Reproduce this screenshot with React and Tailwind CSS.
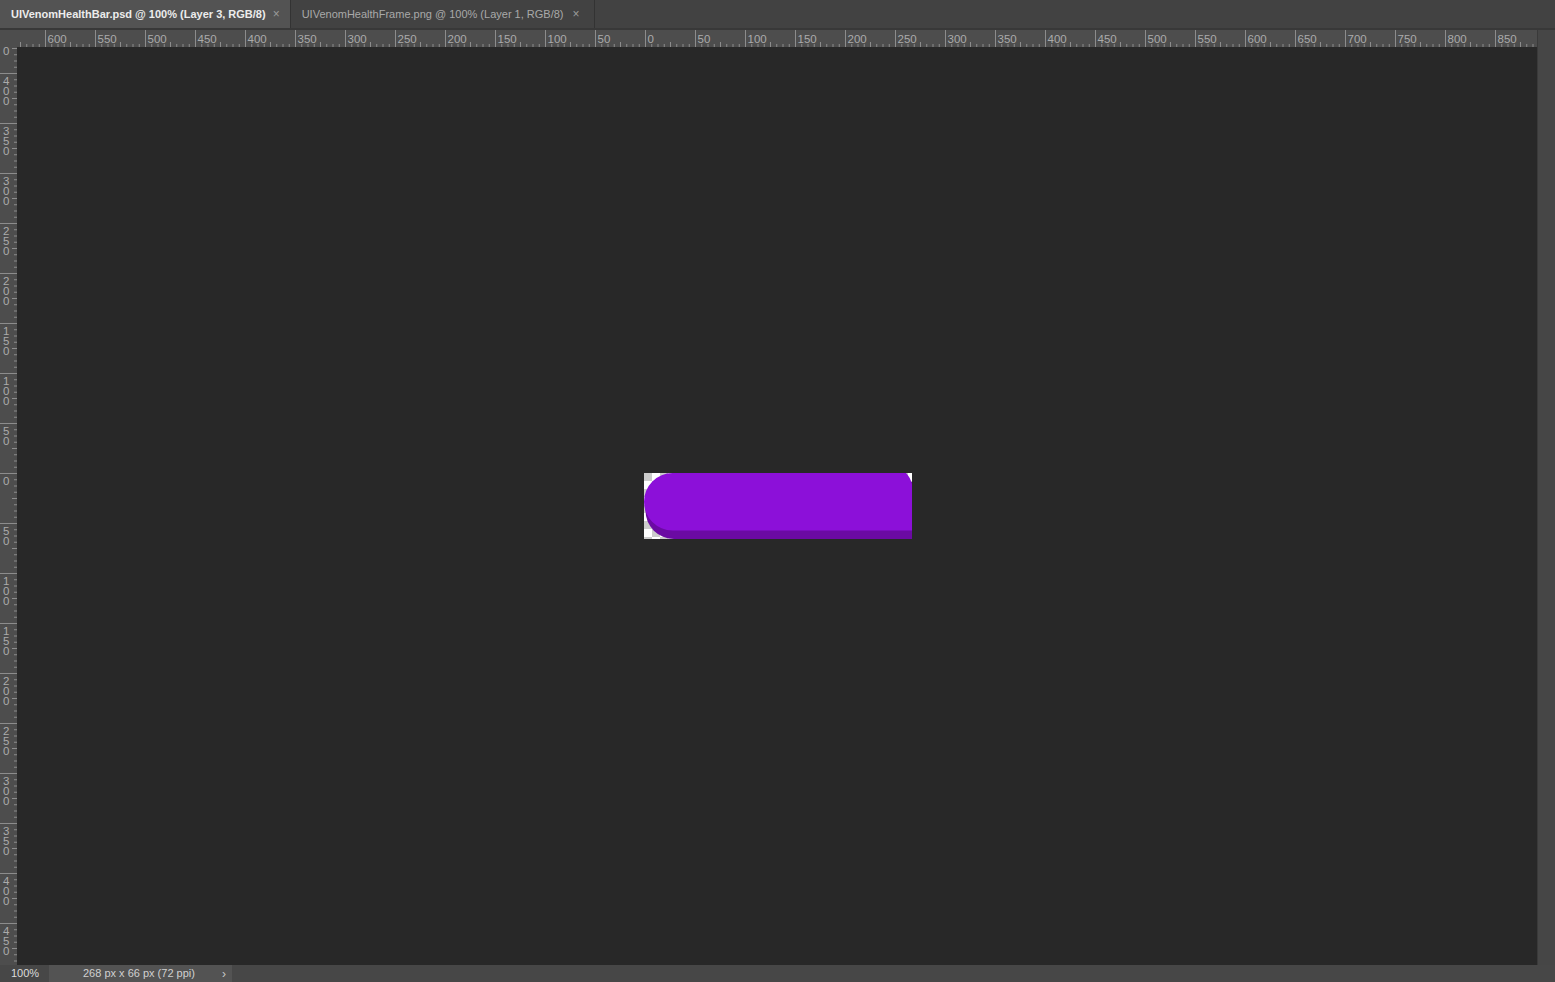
import React from 'react';

const H_ZERO = 628; // svg x of ruler origin (screen x 645)
const V_ZERO = 426; // svg y of ruler origin (screen y 473)

function hTicks() {
  const ticks = [];
  const labels = [];
  for (let i = -112; i <= 160; i++) {
    const x = H_ZERO + i * 6.25;
    if (x < 0 || x > 1520) continue;
    const sub = ((i % 8) + 8) % 8;
    if (sub === 0) {
      ticks.push(<line key={i} x1={x + 0.5} x2={x + 0.5} y1={0} y2={17} stroke="#8c8c8c" strokeWidth="1" />);
      if (x < 1500) {
        labels.push(
          <text key={'t' + i} x={x + 2.5} y={13} fill="#ababab" fontSize="11.5" fontFamily="'Liberation Sans', Arial, sans-serif">
            {Math.abs(i / 8) * 50}
          </text>
        );
      }
    } else {
      const len = sub === 4 ? 5 : 3;
      ticks.push(<line key={i} x1={x + 0.5} x2={x + 0.5} y1={17 - len} y2={17} stroke="#8c8c8c" strokeWidth="1" />);
    }
  }
  return [...ticks, ...labels];
}

function vTicks() {
  const out = [];
  for (let i = -80; i <= 80; i++) {
    const y = V_ZERO + i * 6.25;
    if (y < -40 || y > 918) continue;
    const sub = ((i % 8) + 8) % 8;
    if (sub === 0) {
      out.push(<line key={i} x1={0} x2={17} y1={y + 0.5} y2={y + 0.5} stroke="#8c8c8c" strokeWidth="1" />);
      const chars = String(Math.abs(i / 8) * 50).split('');
      chars.forEach((c, k) => {
        const by = y + 12 + k * 10;
        if (by < 8) return;
        out.push(
          <text key={'t' + i + '-' + k} x={3} y={by} fill="#ababab" fontSize="11.5" fontFamily="'Liberation Sans', Arial, sans-serif">
            {c}
          </text>
        );
      });
    } else {
      const len = sub === 4 ? 5 : 3;
      out.push(<line key={i} x1={17 - len} x2={17} y1={y + 0.5} y2={y + 0.5} stroke="#8c8c8c" strokeWidth="1" />);
    }
  }
  return out;
}

function HealthBar() {
  return (
    <svg width="268" height="66" viewBox="0 0 268 66" className="block">
      <defs>
        <pattern id="checker" width="16" height="16" patternUnits="userSpaceOnUse">
          <rect width="16" height="16" fill="#ffffff" />
          <rect width="8" height="8" fill="#cccccc" />
          <rect x="8" y="8" width="8" height="8" fill="#cccccc" />
        </pattern>
      </defs>
      <rect width="268" height="66" fill="url(#checker)" />
      <rect x="1.5" y="9" width="400" height="57" rx="28.5" fill="#6b0aa3" />
      <path d="M28.5 0 H262 Q266 4 268 11 V57.5 H28.5 A28.5 28.75 0 0 1 28.5 0 Z" fill="#8c10d9" />
    </svg>
  );
}

function Tab({ title, active }) {
  return (
    <div
      className={`flex items-center h-full pl-[11px] pr-[10px] gap-[7px] border-r border-[#333333] ${
        active ? 'bg-[#535353] text-[#ececec] font-bold' : 'bg-[#424242] text-[#a9a9a9] pr-[14px] gap-[9px]'
      }`}
    >
      <span className="whitespace-nowrap">{title}</span>
      <span className="text-[#9a9a9a] font-normal text-[12px]">×</span>
    </div>
  );
}

export default function App() {
  return (
    <div
      className="w-[1555px] h-[982px] flex flex-col bg-[#424242] overflow-hidden text-[11px]"
      style={{ fontFamily: "'Liberation Sans', Arial, sans-serif" }}
    >
      <div className="h-[28px] flex bg-[#424242]">
        <Tab title="UIVenomHealthBar.psd @ 100% (Layer 3, RGB/8)" active />
        <Tab title="UIVenomHealthFrame.png @ 100% (Layer 1, RGB/8)" />
      </div>
      <div className="h-[2px] bg-[#383838]" />
      <div className="flex-1 flex min-h-0">
        <div className="w-[1537px] flex flex-col">
          <div className="h-[17px] flex bg-[#4d4d4d]">
            <div className="w-[17px] h-full bg-[#4d4d4d]" />
            <svg width="1520" height="17" className="block">
              {hTicks()}
            </svg>
          </div>
          <div className="flex-1 flex min-h-0">
            <div className="w-[17px] h-full bg-[#4d4d4d] overflow-hidden">
              <svg width="17" height="918" className="block">
                {vTicks()}
              </svg>
            </div>
            <div className="flex-1 bg-[#282828] flex items-center justify-center pl-[2px]">
              <HealthBar />
            </div>
          </div>
        </div>
        <div className="w-[18px] bg-[#464646] border-l border-[#3a3a3a]" />
      </div>
      <div className="h-[17px] flex bg-[#474747] text-[11px]">
        <div className="w-[49px] flex items-center pl-[11px] text-[#dcdcdc] bg-[#474747]">100%</div>
        <div className="w-[183px] flex items-center bg-[#535353] text-[#d0d0d0]">
          <span className="pl-[34px] flex-1">268 px x 66 px (72 ppi)</span>
          <span className="pr-[6px] text-[#c8c8c8] text-[12px]">›</span>
        </div>
        <div className="flex-1" />
      </div>
    </div>
  );
}
